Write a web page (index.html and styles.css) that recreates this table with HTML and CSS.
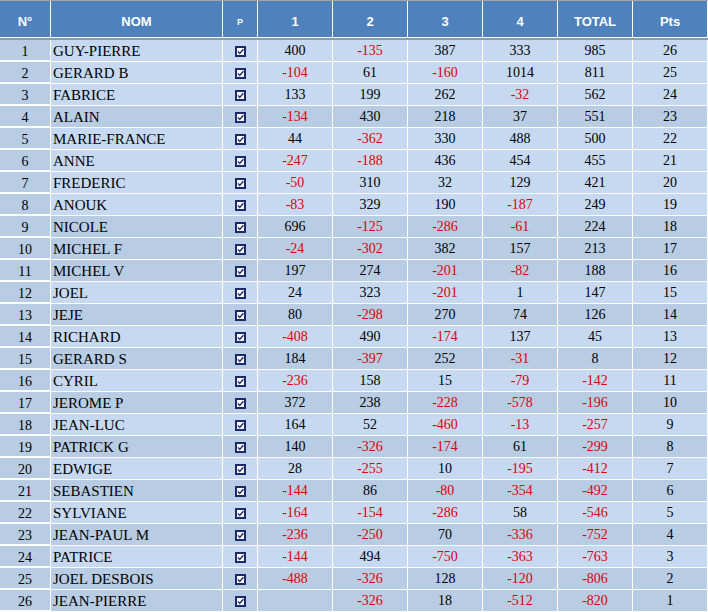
FILE: index.html
```html
<!DOCTYPE html>
<html lang="fr">
<head>
<meta charset="utf-8">
<title>Classement</title>
<link rel="stylesheet" href="styles.css">
</head>
<body>
<svg width="0" height="0" class="defs" aria-hidden="true">
  <defs>
    <symbol id="chk" viewBox="0 0 11 11">
      <rect x="1" y="1" width="9" height="9" fill="#fff" stroke="#1b2a6e" stroke-width="2"/>
      <path d="M3 5.4 L4.7 7.4 L8.4 3.2" fill="none" stroke="#1b2a6e" stroke-width="1.4"/>
    </symbol>
  </defs>
</svg>
<div class="sheet">
  <div class="row head">
    <div class="c">N°</div><div class="c">NOM</div><div class="c p">P</div>
    <div class="c">1</div><div class="c">2</div><div class="c">3</div><div class="c">4</div>
    <div class="c">TOTAL</div><div class="c">Pts</div>
  </div>
  <div class="sep"></div>
  <div class="body">
    <div class="row light"><div class="c n">1</div><div class="c nom">GUY-PIERRE</div><div class="c"><svg class="cb"><use href="#chk"/></svg></div><div class="c">400</div><div class="c neg">-135</div><div class="c">387</div><div class="c">333</div><div class="c">985</div><div class="c">26</div></div>
    <div class="row light"><div class="c n">2</div><div class="c nom">GERARD B</div><div class="c"><svg class="cb"><use href="#chk"/></svg></div><div class="c neg">-104</div><div class="c">61</div><div class="c neg">-160</div><div class="c">1014</div><div class="c">811</div><div class="c">25</div></div>
    <div class="row light"><div class="c n">3</div><div class="c nom">FABRICE</div><div class="c"><svg class="cb"><use href="#chk"/></svg></div><div class="c">133</div><div class="c">199</div><div class="c">262</div><div class="c neg">-32</div><div class="c">562</div><div class="c">24</div></div>
    <div class="row dark"><div class="c n">4</div><div class="c nom">ALAIN</div><div class="c"><svg class="cb"><use href="#chk"/></svg></div><div class="c neg">-134</div><div class="c">430</div><div class="c">218</div><div class="c">37</div><div class="c">551</div><div class="c">23</div></div>
    <div class="row light"><div class="c n">5</div><div class="c nom">MARIE-FRANCE</div><div class="c"><svg class="cb"><use href="#chk"/></svg></div><div class="c">44</div><div class="c neg">-362</div><div class="c">330</div><div class="c">488</div><div class="c">500</div><div class="c">22</div></div>
    <div class="row light"><div class="c n">6</div><div class="c nom">ANNE</div><div class="c"><svg class="cb"><use href="#chk"/></svg></div><div class="c neg">-247</div><div class="c neg">-188</div><div class="c">436</div><div class="c">454</div><div class="c">455</div><div class="c">21</div></div>
    <div class="row light"><div class="c n">7</div><div class="c nom">FREDERIC</div><div class="c"><svg class="cb"><use href="#chk"/></svg></div><div class="c neg">-50</div><div class="c">310</div><div class="c">32</div><div class="c">129</div><div class="c">421</div><div class="c">20</div></div>
    <div class="row light"><div class="c n">8</div><div class="c nom">ANOUK</div><div class="c"><svg class="cb"><use href="#chk"/></svg></div><div class="c neg">-83</div><div class="c">329</div><div class="c">190</div><div class="c neg">-187</div><div class="c">249</div><div class="c">19</div></div>
    <div class="row dark"><div class="c n">9</div><div class="c nom">NICOLE</div><div class="c"><svg class="cb"><use href="#chk"/></svg></div><div class="c">696</div><div class="c neg">-125</div><div class="c neg">-286</div><div class="c neg">-61</div><div class="c">224</div><div class="c">18</div></div>
    <div class="row dark"><div class="c n">10</div><div class="c nom">MICHEL F</div><div class="c"><svg class="cb"><use href="#chk"/></svg></div><div class="c neg">-24</div><div class="c neg">-302</div><div class="c">382</div><div class="c">157</div><div class="c">213</div><div class="c">17</div></div>
    <div class="row dark"><div class="c n">11</div><div class="c nom">MICHEL V</div><div class="c"><svg class="cb"><use href="#chk"/></svg></div><div class="c">197</div><div class="c">274</div><div class="c neg">-201</div><div class="c neg">-82</div><div class="c">188</div><div class="c">16</div></div>
    <div class="row light"><div class="c n">12</div><div class="c nom">JOEL</div><div class="c"><svg class="cb"><use href="#chk"/></svg></div><div class="c">24</div><div class="c">323</div><div class="c neg">-201</div><div class="c">1</div><div class="c">147</div><div class="c">15</div></div>
    <div class="row dark"><div class="c n">13</div><div class="c nom">JEJE</div><div class="c"><svg class="cb"><use href="#chk"/></svg></div><div class="c">80</div><div class="c neg">-298</div><div class="c">270</div><div class="c">74</div><div class="c">126</div><div class="c">14</div></div>
    <div class="row light"><div class="c n">14</div><div class="c nom">RICHARD</div><div class="c"><svg class="cb"><use href="#chk"/></svg></div><div class="c neg">-408</div><div class="c">490</div><div class="c neg">-174</div><div class="c">137</div><div class="c">45</div><div class="c">13</div></div>
    <div class="row dark"><div class="c n">15</div><div class="c nom">GERARD S</div><div class="c"><svg class="cb"><use href="#chk"/></svg></div><div class="c">184</div><div class="c neg">-397</div><div class="c">252</div><div class="c neg">-31</div><div class="c">8</div><div class="c">12</div></div>
    <div class="row light"><div class="c n">16</div><div class="c nom">CYRIL</div><div class="c"><svg class="cb"><use href="#chk"/></svg></div><div class="c neg">-236</div><div class="c">158</div><div class="c">15</div><div class="c neg">-79</div><div class="c neg">-142</div><div class="c">11</div></div>
    <div class="row dark"><div class="c n">17</div><div class="c nom">JEROME P</div><div class="c"><svg class="cb"><use href="#chk"/></svg></div><div class="c">372</div><div class="c">238</div><div class="c neg">-228</div><div class="c neg">-578</div><div class="c neg">-196</div><div class="c">10</div></div>
    <div class="row light"><div class="c n">18</div><div class="c nom">JEAN-LUC</div><div class="c"><svg class="cb"><use href="#chk"/></svg></div><div class="c">164</div><div class="c">52</div><div class="c neg">-460</div><div class="c neg">-13</div><div class="c neg">-257</div><div class="c">9</div></div>
    <div class="row dark"><div class="c n">19</div><div class="c nom">PATRICK G</div><div class="c"><svg class="cb"><use href="#chk"/></svg></div><div class="c">140</div><div class="c neg">-326</div><div class="c neg">-174</div><div class="c">61</div><div class="c neg">-299</div><div class="c">8</div></div>
    <div class="row light"><div class="c n">20</div><div class="c nom">EDWIGE</div><div class="c"><svg class="cb"><use href="#chk"/></svg></div><div class="c">28</div><div class="c neg">-255</div><div class="c">10</div><div class="c neg">-195</div><div class="c neg">-412</div><div class="c">7</div></div>
    <div class="row dark"><div class="c n">21</div><div class="c nom">SEBASTIEN</div><div class="c"><svg class="cb"><use href="#chk"/></svg></div><div class="c neg">-144</div><div class="c">86</div><div class="c neg">-80</div><div class="c neg">-354</div><div class="c neg">-492</div><div class="c">6</div></div>
    <div class="row light"><div class="c n">22</div><div class="c nom">SYLVIANE</div><div class="c"><svg class="cb"><use href="#chk"/></svg></div><div class="c neg">-164</div><div class="c neg">-154</div><div class="c neg">-286</div><div class="c">58</div><div class="c neg">-546</div><div class="c">5</div></div>
    <div class="row dark"><div class="c n">23</div><div class="c nom">JEAN-PAUL M</div><div class="c"><svg class="cb"><use href="#chk"/></svg></div><div class="c neg">-236</div><div class="c neg">-250</div><div class="c">70</div><div class="c neg">-336</div><div class="c neg">-752</div><div class="c">4</div></div>
    <div class="row light"><div class="c n">24</div><div class="c nom">PATRICE</div><div class="c"><svg class="cb"><use href="#chk"/></svg></div><div class="c neg">-144</div><div class="c">494</div><div class="c neg">-750</div><div class="c neg">-363</div><div class="c neg">-763</div><div class="c">3</div></div>
    <div class="row dark"><div class="c n">25</div><div class="c nom">JOEL DESBOIS</div><div class="c"><svg class="cb"><use href="#chk"/></svg></div><div class="c neg">-488</div><div class="c neg">-326</div><div class="c">128</div><div class="c neg">-120</div><div class="c neg">-806</div><div class="c">2</div></div>
    <div class="row dark"><div class="c n">26</div><div class="c nom">JEAN-PIERRE</div><div class="c"><svg class="cb"><use href="#chk"/></svg></div><div class="c"></div><div class="c neg">-326</div><div class="c">18</div><div class="c neg">-512</div><div class="c neg">-820</div><div class="c">1</div></div>
  </div>
</div>
</body>
</html>
```
FILE: styles.css
```css
html, body {
  margin: 0;
  padding: 0;
  background: #ffffff;
}
.defs {
  position: absolute;
  width: 0;
  height: 0;
}
.sheet {
  width: 708px;
  display: flex;
  flex-direction: column;
  background: #ffffff;
}
.row {
  display: grid;
  grid-template-columns: 50px 171px 34px repeat(6, 74px);
  column-gap: 1px;
  background: #ffffff;
}
.head {
  border-top: 1px solid #a6a6a6;
  height: 36px;
  margin-bottom: 1px;
}
.head .c {
  background: #4f81bd;
  color: #ffffff;
  font-family: "Liberation Sans", Arial, sans-serif;
  font-weight: bold;
  font-size: 13px;
  padding-top: 4px;
}
.head .p {
  font-size: 9px;
  padding-top: 6px;
}
.sep {
  height: 2px;
  background: #8e9aab;
}
.body {
  display: flex;
  flex-direction: column;
  row-gap: 1px;
  padding-bottom: 1px;
}
.body .row {
  height: 21px;
}
.c {
  display: flex;
  align-items: center;
  justify-content: center;
  font-family: "Liberation Serif", "Times New Roman", serif;
  font-size: 14px;
  color: #000000;
  white-space: nowrap;
  overflow: hidden;
}
.body .c {
  padding-top: 1px;
}
.light .c {
  background: #c6d9f1;
}
.dark .c {
  background: #b8cce4;
}
.body .c.n {
  background: #b8cce4;
  box-shadow: inset 0 -1px 0 #ffffff;
  padding-top: 2px;
}
.c.nom {
  justify-content: flex-start;
  padding-left: 2px;
  font-size: 15px;
}
.c.neg {
  color: #e00000;
}
.cb {
  width: 11px;
  height: 11px;
  display: block;
  margin-left: 1px;
}
```
